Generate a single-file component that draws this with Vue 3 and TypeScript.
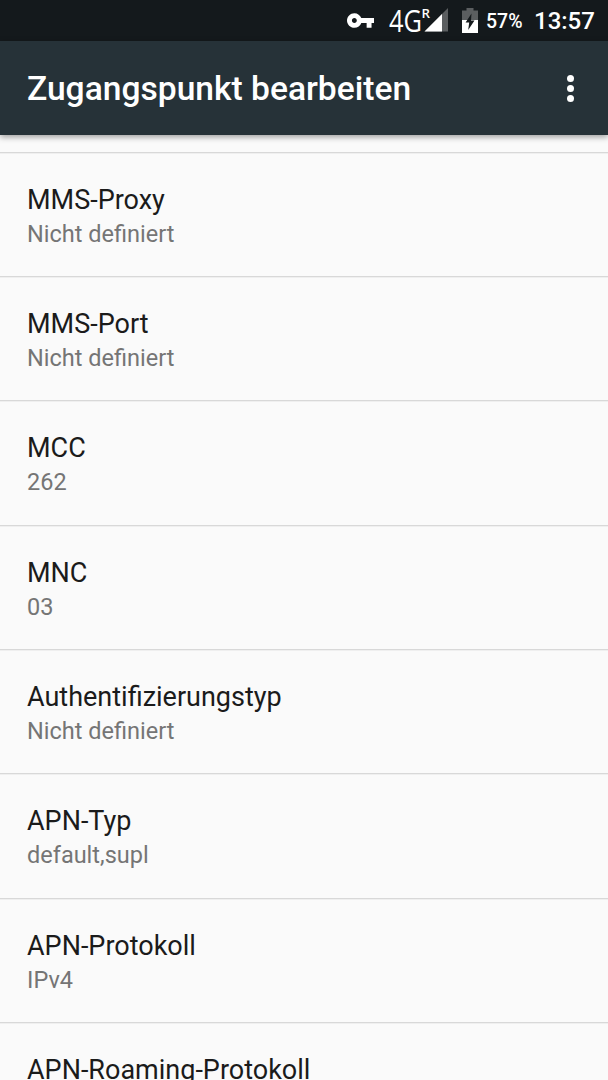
<script setup lang="ts">
interface Setting {
  title: string
  summary?: string
}

const settings: Setting[] = [
  { title: 'MMS-Proxy', summary: 'Nicht definiert' },
  { title: 'MMS-Port', summary: 'Nicht definiert' },
  { title: 'MCC', summary: '262' },
  { title: 'MNC', summary: '03' },
  { title: 'Authentifizierungstyp', summary: 'Nicht definiert' },
  { title: 'APN-Typ', summary: 'default,supl' },
  { title: 'APN-Protokoll', summary: 'IPv4' },
  { title: 'APN-Roaming-Protokoll' },
]
</script>

<template>
  <div class="screen">
    <div class="status">
      <svg class="key" viewBox="1 6 22 12" aria-hidden="true">
        <path fill="#fff" d="M12.65 10C11.83 7.67 9.61 6 7 6c-3.31 0-6 2.69-6 6s2.69 6 6 6c2.61 0 4.83-1.67 5.65-4H17v4h4v-4h2v-4H12.65zM7 14c-1.1 0-2-.9-2-2s.9-2 2-2 2 .9 2 2-.9 2-2 2z" />
      </svg>
      <svg class="signal" viewBox="0 0 62 28" aria-hidden="true">
        <text x="1" y="26" font-size="31" textLength="33" lengthAdjust="spacingAndGlyphs">4G</text>
        <text x="33.500" y="12" font-size="13" textLength="8.500" lengthAdjust="spacingAndGlyphs" class="roam">R</text>
        <path d="M60 2V25.500H36.500z" fill="#5b5e60" />
        <path d="M54 8V25.500H36.500z" fill="#fff" />
      </svg>
      <svg class="battery" viewBox="0 0 16 25" aria-hidden="true">
        <path d="M4.5 0h7v2.500H16V13H0V2.500h4.500z" fill="#5b5e60" />
        <path d="M0 12h16v13H0z" fill="#fff" />
        <path d="M9.500 5.500L3.600 14.500H7.200L6.200 22 12.500 12.500H9z" fill="#14191c" />
      </svg>
      <span class="percent">57%</span>
      <span class="clock">13:57</span>
    </div>
    <header class="bar">
      <h1>Zugangspunkt bearbeiten</h1>
      <button class="more" aria-label="Weitere Optionen"><i /><i /><i /></button>
    </header>
    <main class="list">
      <section v-for="item in settings" :key="item.title" class="row">
        <div class="title">{{ item.title }}</div>
        <div v-if="item.summary" class="summary">{{ item.summary }}</div>
      </section>
    </main>
  </div>
</template>

<style>
body {
  margin: 0;
  overflow: hidden;
}
</style>

<style scoped>
.screen {
  width: 608px;
  height: 1080px;
  overflow: hidden;
  display: flex;
  flex-direction: column;
  background: #fafafa;
  font-family: Roboto, sans-serif;
}
.status {
  flex: none;
  height: 40.500px;
  box-sizing: border-box;
  padding-right: 14px;
  display: flex;
  justify-content: flex-end;
  align-items: flex-start;
  background: #14191c;
  color: #fff;
}
.key {
  width: 27px;
  height: 15px;
  margin: 13px 14px 0 0;
}
.signal {
  width: 62px;
  height: 28px;
  margin: 6px 12px 0 0;
  overflow: visible;
  font-family: "Open Sans", sans-serif;
  fill: #fff;
}
.roam {
  font-weight: 600;
}
.battery {
  width: 16px;
  height: 25px;
  margin: 8px 8px 0 0;
}
.percent {
  width: 37px;
  margin-right: 11px;
  font-size: 19.500px;
  font-weight: 500;
  line-height: 43px;
}
.clock {
  width: 60px;
  font-size: 24px;
  font-weight: 500;
  line-height: 43px;
}
.bar {
  flex: none;
  height: 94.500px;
  box-sizing: border-box;
  padding: 3px 31.500px 0 27px;
  display: flex;
  justify-content: space-between;
  align-items: center;
  background: #263238;
  box-shadow: 0 2px 6px rgba(0, 0, 0, 0.38);
}
h1 {
  margin: 0;
  color: #fff;
  font-size: 33.600px;
  font-weight: 500;
  line-height: 40px;
  white-space: nowrap;
}
.more {
  width: 12px;
  padding: 0;
  border: 0;
  margin-top: -2px;
  background: none;
  display: flex;
  flex-direction: column;
  align-items: center;
  gap: 3.200px;
}
.more i {
  width: 7px;
  height: 7px;
  border-radius: 50%;
  background: #fff;
}
.list {
  flex: none;
  padding-top: 16.800px;
}
.row {
  height: 124.300px;
  box-sizing: border-box;
  padding: 31px 27px 0;
  border-top: 1px solid #d8d8d8;
  box-shadow: inset 0 1px #efefef;
}
.title {
  color: #1b1b1b;
  font-size: 27px;
  line-height: 33px;
}
.summary {
  margin-top: 3px;
  color: #757575;
  font-size: 23.500px;
  line-height: 28px;
}
</style>
